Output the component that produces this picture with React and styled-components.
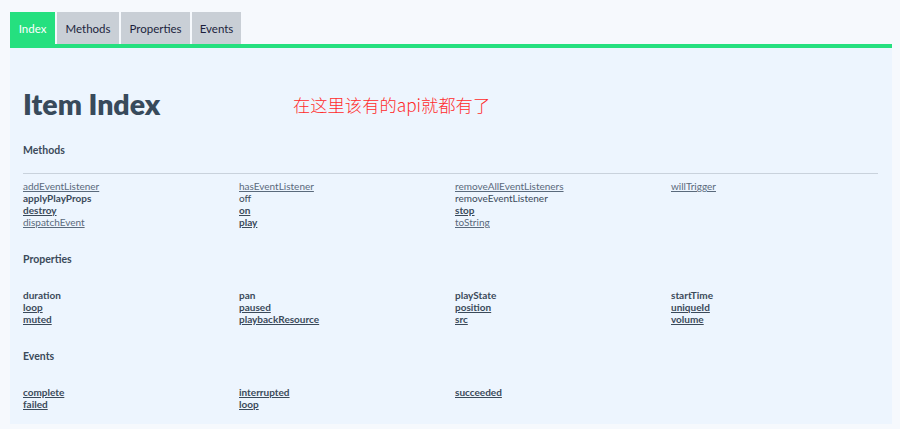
import React from "react";
import styled, { createGlobalStyle } from "styled-components";

const Global = createGlobalStyle`
  html, body { margin: 0; padding: 0; background: #f6f9fd; }
  body { font-family: Lato, "Open Sans", sans-serif; }
`;

const Page = styled.div`
  padding: 12px 8px 0 10px;
`;

const Tabs = styled.div`
  display: flex;
  gap: 2px;
  height: 32px;
`;

const Tab = styled.div`
  display: flex;
  align-items: center;
  justify-content: center;
  width: ${(p) => p.$w}px;
  background: ${(p) => (p.$active ? "#25e07f" : "#c9cfd6")};
  color: ${(p) => (p.$active ? "#ffffff" : "#1c1f3d")};
  font-family: Lato, "Open Sans", sans-serif;
  font-size: 11.5px;
`;

const Panel = styled.div`
  border-top: 4px solid #25e07f;
  background: #edf5fe;
  padding: 40px 14px 14px 13px;
`;

const Header = styled.div`
  display: flex;
  align-items: center;
  height: 32px;
`;

const Title = styled.h1`
  margin: 0;
  width: 270px;
  font-family: Lato, "Open Sans", sans-serif;
  font-weight: 800;
  font-size: 28.5px;
  line-height: 32px;
  color: #384a5b;
`;

const Note = styled.span`
  font-family: "Noto Sans CJK SC", sans-serif;
  font-size: 17.3px;
  font-weight: 300;
  color: #ff2b2b;
`;

const SectionTitle = styled.h4`
  margin: ${(p) => p.$top}px 0 0;
  padding-bottom: 17px;
  border-bottom: 1px solid ${(p) => (p.$rule ? "#c9d2dc" : "transparent")};
  font-family: Lato, "Open Sans", sans-serif;
  font-weight: 700;
  font-size: 10.5px;
  line-height: 12px;
  color: #3b4a5a;
`;

const List = styled.div`
  display: grid;
  grid-template-columns: repeat(4, 216px);
  grid-auto-flow: column;
  grid-template-rows: repeat(${(p) => p.$rows}, 12px);
  margin-top: 6px;
`;

const Item = styled.span`
  font-family: Lato, "Open Sans", sans-serif;
  font-size: 10px;
  line-height: 12px;
  white-space: nowrap;
  color: ${(p) => (p.$kind === "link" ? "#5a6a7c" : "#3b4a5a")};
  font-weight: ${(p) => (p.$kind === "bold" || p.$kind === "boldlink" ? 700 : 400)};
  text-decoration: ${(p) => (p.$kind === "link" || p.$kind === "boldlink" ? "underline" : "none")};
  text-underline-offset: 1px;
`;

const methods = [
  ["addEventListener", "link"],
  ["applyPlayProps", "bold"],
  ["destroy", "boldlink"],
  ["dispatchEvent", "link"],
  ["hasEventListener", "link"],
  ["off", "plain"],
  ["on", "boldlink"],
  ["play", "boldlink"],
  ["removeAllEventListeners", "link"],
  ["removeEventListener", "plain"],
  ["stop", "boldlink"],
  ["toString", "link"],
  ["willTrigger", "link"],
];

const properties = [
  ["duration", "bold"],
  ["loop", "boldlink"],
  ["muted", "boldlink"],
  ["pan", "bold"],
  ["paused", "boldlink"],
  ["playbackResource", "boldlink"],
  ["playState", "bold"],
  ["position", "boldlink"],
  ["src", "boldlink"],
  ["startTime", "bold"],
  ["uniqueId", "boldlink"],
  ["volume", "boldlink"],
];

const events = [
  ["complete", "boldlink"],
  ["failed", "boldlink"],
  ["interrupted", "boldlink"],
  ["loop", "boldlink"],
  ["succeeded", "boldlink"],
];

function Section({ title, items, rows, top, rule }) {
  return (
    <>
      <SectionTitle $top={top} $rule={rule}>{title}</SectionTitle>
      <List $rows={rows}>
        {items.map(([name, kind], i) => (
          <Item key={i} $kind={kind}>{name}</Item>
        ))}
      </List>
    </>
  );
}

export default function App() {
  return (
    <Page>
      <Global />
      <Tabs>
        <Tab $active $w={45}>Index</Tab>
        <Tab $w={62}>Methods</Tab>
        <Tab $w={69}>Properties</Tab>
        <Tab $w={49}>Events</Tab>
      </Tabs>
      <Panel>
        <Header>
          <Title>Item Index</Title>
          <Note>在这里该有的api就都有了</Note>
        </Header>
        <Section title="Methods" items={methods} rows={4} top={24} rule />
        <Section title="Properties" items={properties} rows={3} top={25} />
        <Section title="Events" items={events} rows={2} top={25} />
      </Panel>
    </Page>
  );
}
